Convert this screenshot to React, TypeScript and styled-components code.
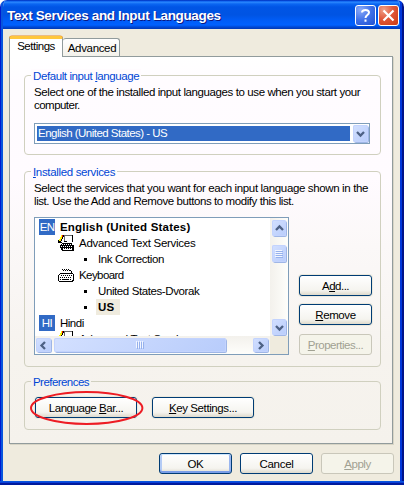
import React from "react";
import styled, { createGlobalStyle, css } from "styled-components";

const Global = createGlobalStyle`
  * { box-sizing: border-box; }
  html, body { margin: 0; background: #fff; overflow: hidden; }
  body { font: 11.5px/13px "Liberation Sans", Arial, sans-serif; color: #000; }
`;

const Window = styled.main`
  width: 404px;
  height: 485px;
  display: flex;
  flex-direction: column;
  border: solid transparent;
  border-width: 0 4px 4px 3px;
  border-radius: 7px 7px 0 0;
  overflow: hidden;
  background:
    linear-gradient(#efebde, #efebde) padding-box,
    linear-gradient(#0000 0 481px, #0855dd 481px 482px, #0a3fd8 482px 483px, #001a9c 483px) border-box,
    linear-gradient(90deg, #0019cf 0 1px, #0855dd 1px 3px, #0046e0 3px 400px, #0037dc 400px 402px, #00138c 402px) border-box;
`;

const TitleBar = styled.header`
  height: 29px;
  flex: none;
  margin: 0 -4px 0 -3px;
  padding: 5px 5px 3px 7px;
  display: flex;
  align-items: center;
  gap: 2px;
  background: linear-gradient(#0831b5 0, #0050e8 1px, #2d8bff 2px, #0a66f2 4px, #0055e5 7px, #0054e3 15px, #005df8 21px, #0061ff 25px, #0048d5 27px, #0038b5 29px);
`;

const Title = styled.h1`
  flex: 1;
  margin: 0;
  color: #fff;
  font: bold 13.5px/18px "Liberation Sans", Arial, sans-serif;
  letter-spacing: -0.36px;
  white-space: nowrap;
  text-shadow: 1px 1px 0 #0a1883;
`;

const CaptionButton = styled.button<{ $close?: boolean }>`
  width: 21px;
  height: 21px;
  padding: 0;
  border: 1px solid #fff;
  border-radius: 3px;
  display: grid;
  place-items: center;
  background: ${(p) =>
    p.$close
      ? "radial-gradient(circle at 25% 20%, #f0a088, #e0583a 45%, #cc3a10)"
      : "radial-gradient(circle at 25% 20%, #8cabf8, #4071e8 50%, #2050d0)"};
`;

const Label = styled.span<{ $ls?: number }>`
  letter-spacing: ${(p) => p.$ls ?? -0.4}px;
  white-space: pre;
  u { text-decoration: underline; text-underline-offset: 1px; text-decoration-thickness: 1px; }
`;

const Body = styled.div`
  flex: 1;
  display: flex;
  flex-direction: column;
  padding: 7px 6px 0 6px;
`;

const Tabs = styled.nav`
  height: 20px;
  display: flex;
  align-items: flex-end;
`;

const Tab = styled.div<{ $active?: boolean }>`
  position: relative;
  display: flex;
  justify-content: center;
  border: 1px solid #919b9c;
  border-radius: 3px 3px 0 0;
  ${(p) =>
    p.$active
      ? css`
          width: 54px;
          height: 21px;
          margin-bottom: -1px;
          padding-top: 1px;
          background: #fff;
          border-top: 3px solid #ffc73c;
          border-bottom: 0;
          z-index: 1;
          box-shadow: 0 -0.5px 0 #e68b2c;
        `
      : css`
          width: 57px;
          height: 18px;
          padding: 3px 0 0 2px;
          background: linear-gradient(#fff, #f3f1ea);
          border-left: 0;
          border-bottom: 0;
        `}
`;

const Panel = styled.section`
  width: 384px;
  height: 388px;
  padding: 18px 11px 0 14px;
  border: 1px solid #919b9c;
  background: linear-gradient(#fff 0, #fffcff 25px, #fffbff 120px, #fbf8f8 190px, #f6f3ee 300px, #f5f2ec);
  box-shadow: 1px 1px 0 #d8d5c6;
`;

const Group = styled.section<{ $h: number; $gap?: number }>`
  position: relative;
  width: 357px;
  height: ${(p) => p.$h}px;
  margin-bottom: ${(p) => p.$gap ?? 0}px;
  padding: 0 8px 0 9px;
  border: 1px solid #d0d0bf;
  border-radius: 4px;
`;

const Legend = styled.h2<{ $low?: boolean }>`
  position: absolute;
  left: 6px;
  top: -7px;
  margin: 0;
  padding: 0 2px;
  height: 14px;
  font: inherit;
  line-height: 15px;
  color: #0046d5;
  background: ${(p) => (p.$low ? "#f6f3ee" : "#fffbfe")};
`;

const Para = styled.p`
  margin: 0;
  padding: 10px 0 0;
  display: flex;
  flex-direction: column;
`;

const Combo = styled.div`
  margin-top: 11px;
  width: 336px;
  height: 21px;
  padding: 2px 1px 2px 2px;
  border: 1px solid #7f9db9;
  background: #fff;
  display: flex;
  justify-content: space-between;
`;

const ComboValue = styled.div`
  width: 313px;
  height: 15px;
  padding: 1px 0 0 1px;
  color: #fff;
  background: #316ac5;
`;

const Glossy = styled.div<{ $w: number; $h: number }>`
  flex: none;
  align-self: center;
  width: ${(p) => p.$w}px;
  height: ${(p) => p.$h}px;
  display: grid;
  place-items: center;
  border-radius: 2px;
  background: linear-gradient(135deg, #d3e0ff, #b8ccfb);
  box-shadow: inset 0 0 0 1px #c3d3fd, 1px 1px 0 #9fb6e6;
`;

const Services = styled.div`
  display: flex;
  align-items: flex-end;
  gap: 10px;
  margin-top: 9px;
`;

const ListBox = styled.div`
  flex: none;
  width: 255px;
  height: 138px;
  border: 1px solid #7f9db9;
  background: #fff;
  display: grid;
  grid-template: 118px 18px / 235px 18px;
  overflow: hidden;
`;

const Rows = styled.div`
  padding: 1px 0 0 4px;
  overflow: hidden;
`;

const Row = styled.div<{ $indent?: number; $bold?: boolean }>`
  height: 16px;
  padding-left: ${(p) => p.$indent ?? 0}px;
  display: flex;
  align-items: center;
  gap: 5px;
  font-weight: ${(p) => (p.$bold ? "bold" : "normal")};
  svg { flex: none; }
`;

const Lang = styled.span`
  width: 16px;
  height: 16px;
  flex: none;
  padding-top: 2px;
  text-align: center;
  font-weight: normal;
  color: #fff;
  background: #316ac5;
`;

const Bullet = styled.i`
  width: 3px;
  height: 3px;
  margin: 1px 6px 0 0;
  background: #000;
`;

const Chosen = styled.span`
  width: 24px;
  height: 16px;
  margin-left: -2px;
  padding: 2px 0 0 2px;
  background: #efebde;
`;

const VScroll = styled.div`
  display: flex;
  flex-direction: column;
  align-items: center;
  padding: 2px 0 1px;
  background: linear-gradient(90deg, #f3f1ec, #fefefb);
`;

const HScroll = styled.div`
  display: flex;
  align-items: center;
  padding: 0 2px 0 1px;
  background: linear-gradient(#f3f1ec, #fefefb);
`;

const Space = styled.div<{ $s?: number }>`
  flex: ${(p) => (p.$s ? `0 0 ${p.$s}px` : "1")};
`;

const Corner = styled.div`
  background: #efebde;
`;

const Buttons = styled.div`
  display: flex;
  flex-direction: column;
  gap: 8px;
`;

const Button = styled.button<{ $w?: number; $focus?: boolean; $mt?: number }>`
  width: ${(p) => p.$w ?? 73}px;
  height: 21px;
  margin: ${(p) => p.$mt ?? 0}px 0 0;
  padding: 1px 0 0;
  font: inherit;
  color: #000;
  border: 1px solid #003c74;
  border-radius: 3px;
  background: linear-gradient(#fff, #f5f4ef 75%, #dedacc);
  box-shadow: ${(p) =>
    p.$focus ? "inset 0 1px 0 #cee7ff, inset 0 -2px 0 #7b9ee8, inset 2px 0 0 #b4cbf5, inset -2px 0 0 #9ab6ef" : "0 0 0 1px #ece9dd"};
  &:disabled {
    color: #a1a192;
    border-color: #c9c7ba;
    background: #f5f4ea;
    box-shadow: none;
  }
`;

const PrefRow = styled.div`
  display: flex;
  gap: 15px;
  padding: 15px 0 0 1px;
`;

const Marker = styled.svg`
  position: absolute;
  left: 4px;
  top: 8px;
`;

const Footer = styled.footer`
  display: flex;
  justify-content: flex-end;
  gap: 8px;
  padding-top: 9px;
`;

const arrows = { up: "M1 6 4.5 2.5 8 6", down: "M1 3 4.5 6.5 8 3", left: "M6 1 2.5 4.5 6 8", right: "M3 1 6.5 4.5 3 8" };

const Arrow = ({ dir }: { dir: keyof typeof arrows }) => (
  <svg width="9" height="9" viewBox="0 0 9 9">
    <path d={arrows[dir]} fill="none" stroke="#4d6185" strokeWidth="2.3" />
  </svg>
);

const Grip = ({ vertical }: { vertical?: boolean }) => (
  <svg width="8" height="8" viewBox="0 0 8 8" shapeRendering="crispEdges">
    <path d={vertical ? "M0 .5h7M0 2.5h7M0 4.5h7M0 6.5h7" : "M.5 0v7M2.5 0v7M4.5 0v7M6.5 0v7"} stroke="#f2f6ff" />
    <path d={vertical ? "M1 1.5h7M1 3.5h7M1 5.5h7M1 7.5h7" : "M1.5 1v7M3.5 1v7M5.5 1v7M7.5 1v7"} stroke="#96b1ec" />
  </svg>
);

const KeyboardIcon = () => (
  <svg width="16" height="16" viewBox="0 0 16 16" shapeRendering="crispEdges">
    <path d="M4 2.5h1M5 3.5h1M6 2.5h1M7 3.5h1M8 2.5h1M9 3.5h1M10 2.5h1M11 3.5h2M13 4.5h1M13 5.5h1" stroke="#000" />
    <path d="M2 6h13v1h1v7h-1v1H1v-1H0V8h1V7h1z" fill="#000" />
    <path d="M2 7h13v6h-1v1H1V8h1z" fill="#fff" />
    <path d="M3 8.5h11M2 10.5h12" stroke="#000" strokeDasharray="1 1" />
    <path d="M2 12.5h1M4 12.5h7M12 12.5h1" stroke="#000" />
  </svg>
);

const TextServicesIcon = () => (
  <svg width="16" height="16" viewBox="0 0 16 16" shapeRendering="crispEdges">
    <path d="M6.5.5h8v6h-8z" fill="#fff" stroke="#666" />
    <path d="M14.5 0v7M6 6.5h3M1 6.5h2M0 7.5h4M4 8.5h10" stroke="#000" />
    <path d="M9 5h5v2H9z" fill="#fff" />
    <path d="M3 9h12v1h1v6H4v-1H3v-2H2v-3h1z" fill="#000" />
    <path d="M4 9.5h11M3 11.5h12M5 13.5h10" stroke="#fff" strokeDasharray="1 1" />
    <path d="M5 14.5h9" stroke="#fff" />
    <path d="M3 0h1v2H3zM2 2h1v2H2zM1 4h1v2H1z" fill="#ff0" />
    <path d="M4 0h1v2H4z" fill="#e00000" />
    <path d="M3 2h1v2H3zM2 4h1v2H2z" fill="#ffe000" />
    <path d="M5 0h1v2H5zM4 2h1v2H4zM3 4h1v2H3zM0 5h1v2H0z" fill="#000" />
  </svg>
);

export default function App() {
  return (
    <>
      <Global />
      <Window>
        <TitleBar>
          <Title>Text Services and Input Languages</Title>
          <CaptionButton aria-label="Help">
            <svg width="13" height="15" viewBox="0 0 13 15">
              <path d="M3 4.5C3 1 10 1 10 4.5 10 7 6.5 7 6.5 10M6.5 11.5v2.2" fill="none" stroke="#fff" strokeWidth="2" />
            </svg>
          </CaptionButton>
          <CaptionButton $close aria-label="Close">
            <svg width="13" height="13" viewBox="0 0 13 13">
              <path d="m1.5 1.5 10 10m0-10-10 10" stroke="#fff" strokeWidth="2.2" />
            </svg>
          </CaptionButton>
        </TitleBar>
        <Body>
          <Tabs>
            <Tab $active><Label $ls={-0.48}>Settings</Label></Tab>
            <Tab><Label $ls={-0.33}>Advanced</Label></Tab>
          </Tabs>
          <Panel>
            <Group $h={80} $gap={16}>
              <Legend><Label>Default input <u>l</u>anguage</Label></Legend>
              <Para>
                <Label>Select one of the installed input languages to use when you start your</Label>
                <Label $ls={-0.53}>computer.</Label>
              </Para>
              <Combo>
                <ComboValue><Label $ls={-0.52}>English (United States) - US</Label></ComboValue>
                <Glossy $w={15} $h={17}><Arrow dir="down" /></Glossy>
              </Combo>
            </Group>
            <Group $h={196} $gap={14}>
              <Legend><Label $ls={-0.34}><u>I</u>nstalled services</Label></Legend>
              <Para>
                <Label $ls={-0.36}>Select the services that you want for each input language shown in the</Label>
                <Label $ls={-0.42}>list. Use the Add and Remove buttons to modify this list.</Label>
              </Para>
              <Services>
                <ListBox>
                  <Rows>
                    <Row $bold><Lang><Label $ls={-0.8}>EN</Label></Lang><Label $ls={0.2}>English (United States)</Label></Row>
                    <Row $indent={19}><TextServicesIcon /><Label $ls={-0.28}>Advanced Text Services</Label></Row>
                    <Row $indent={45}><Bullet /><Label>Ink Correction</Label></Row>
                    <Row $indent={19}><KeyboardIcon /><Label $ls={-0.58}>Keyboard</Label></Row>
                    <Row $indent={45}><Bullet /><Label>United States-Dvorak</Label></Row>
                    <Row $indent={45} $bold><Bullet /><Chosen><Label $ls={0.2}>US</Label></Chosen></Row>
                    <Row><Lang><Label>HI</Label></Lang><Label $ls={-0.5}>Hindi</Label></Row>
                    <Row $indent={19}><TextServicesIcon /><Label $ls={-0.28}>Advanced Text Services</Label></Row>
                  </Rows>
                  <VScroll>
                    <Glossy $w={14} $h={16}><Arrow dir="up" /></Glossy>
                    <Space $s={9} />
                    <Glossy $w={14} $h={17}><Grip vertical /></Glossy>
                    <Space />
                    <Glossy $w={14} $h={16}><Arrow dir="down" /></Glossy>
                  </VScroll>
                  <HScroll>
                    <Glossy $w={15} $h={14}><Arrow dir="left" /></Glossy>
                    <Space $s={3} />
                    <Glossy $w={172} $h={14}><Grip /></Glossy>
                    <Space />
                    <Glossy $w={15} $h={14}><Arrow dir="right" /></Glossy>
                  </HScroll>
                  <Corner />
                </ListBox>
                <Buttons>
                  <Button><Label $ls={-0.5}>A<u>d</u>d...</Label></Button>
                  <Button><Label><u>R</u>emove</Label></Button>
                  <Button disabled $mt={1}><Label $ls={-0.5}><u>P</u>roperties...</Label></Button>
                </Buttons>
              </Services>
            </Group>
            <Group $h={49}>
              <Legend $low><Label $ls={-0.55}>Preferences</Label></Legend>
              <PrefRow>
                <Button $w={102}><Label $ls={-0.45}>Language <u>B</u>ar...</Label></Button>
                <Button $w={102}><Label><u>K</u>ey Settings...</Label></Button>
              </PrefRow>
              <Marker width="116" height="38" viewBox="0 0 116 38">
                <ellipse cx="57.7" cy="18" rx="55.7" ry="16" fill="none" stroke="#ed1c24" strokeWidth="2" />
              </Marker>
            </Group>
          </Panel>
          <Footer>
            <Button $focus><Label>OK</Label></Button>
            <Button><Label $ls={-0.3}>Cancel</Label></Button>
            <Button disabled><Label $ls={-0.45}><u>A</u>pply</Label></Button>
          </Footer>
        </Body>
      </Window>
    </>
  );
}
